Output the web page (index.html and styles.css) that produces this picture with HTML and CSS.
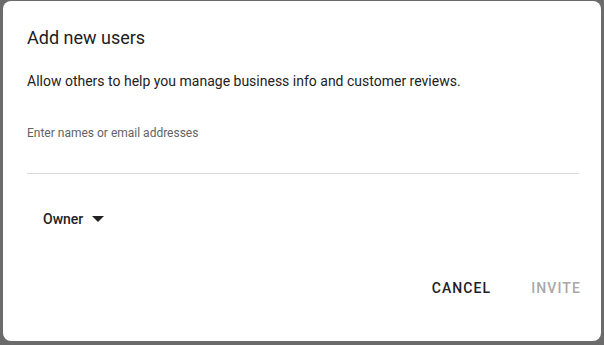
FILE: index.html
```html
<!DOCTYPE html>
<html lang="en">
	<head>
		<meta charset="utf-8">
		<title>Add new users</title>
		<link rel="stylesheet" href="styles.css">
	</head>
	<body>
		<div class="dialog">
			<h2 class="title">Add new users</h2>
			<p class="desc">Allow others to help you manage business info and customer reviews.</p>
			<div class="field">
				<label class="field-label">Enter names or email addresses</label>
			</div>
			<div class="role">
				<span>Owner</span>
				<svg class="caret" width="12" height="6" viewBox="0 0 12 6"><path d="M0 0h12L6 6z" fill="#222"/></svg>
			</div>
			<div class="actions">
				<button class="btn">CANCEL</button>
				<button class="btn disabled">INVITE</button>
			</div>
		</div>
	</body>
</html>
```

FILE: styles.css
```css
body{
	margin: 0;
	padding: 1px 3px 4px 3px;
	background: #6b6b6b;
	font-family: Roboto, "Liberation Sans", sans-serif;
	color: #202124;
	height: 345px;
	box-sizing: border-box;
}

.dialog{
	background: #fff;
	border-radius: 8px;
	height: 100%;
	box-sizing: border-box;
	padding: 26px 20px 0 24px;
	display: flex;
	flex-direction: column;
}

.title{
	margin: 0;
	font-size: 18px;
	font-weight: 400;
	line-height: 22px;
}

.desc{
	margin: 22px 0 0;
	font-size: 14px;
	line-height: 20px;
	color: #222;
}

.field{
	margin: 31px 2px 0 0;
	height: 51px;
	border-bottom: 1px solid #dadada;
}

.field-label{
	font-size: 12px;
	color: #5f6368;
	line-height: 16px;
}

.role{
	margin: 37px 0 0 16px;
	display: flex;
	align-items: center;
	gap: 9px;
	font-size: 14px;
	font-weight: 500;
	color: #222;
}

.caret{
	margin-top: -1px;
}

.actions{
	margin-top: 53px;
	display: flex;
	justify-content: flex-end;
	gap: 40px;
}

.btn{
	background: none;
	border: none;
	padding: 0;
	font-family: inherit;
	font-size: 14px;
	font-weight: 500;
	letter-spacing: 1.1px;
	color: #202124;
	cursor: pointer;
}

.btn.disabled{
	color: #a8a8a8;
	cursor: default;
}
```
